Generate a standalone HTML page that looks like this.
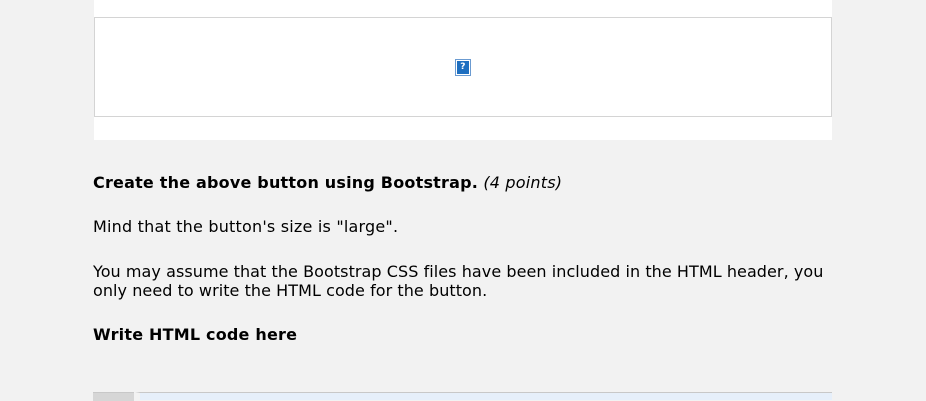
<!DOCTYPE html>
<html><head><style>
body{margin:0;background:#f2f2f2;width:926px;height:400px;overflow:hidden;font-family:"DejaVu Sans","Liberation Sans",sans-serif;font-size:16px;letter-spacing:0.2px;color:#000;position:relative}
.panel{position:absolute;left:94px;top:0;width:738px;height:140px;background:#fff}
.box{position:absolute;left:94px;top:17px;width:736px;height:98px;border:1px solid #d4d4d4;background:#fff}
.ic{position:absolute;left:455px;top:59px;width:12px;height:13px;border:1px solid #6b9bd1;background:#fff;padding:1px}
.ic div{width:12px;height:13px;background:#1e6fc0;color:#fff;font:bold 9px "DejaVu Sans",sans-serif;text-align:center;line-height:13px}
p{position:absolute;left:93px;margin:0;line-height:19px;width:760px}
.g{position:absolute;top:392px;left:93px;width:41px;height:8px;background:#d6d6d6;border-top:1px solid #c8c8c8}
.gb{position:absolute;top:392px;left:135px;width:697px;height:8px;background:#e6effa;border-top:1px solid #c8c8c8;border-left:5px solid #f2f2f2;box-sizing:border-box}
</style></head><body>
<div class="panel"></div>
<div class="box"></div>
<div class="ic"><div>?</div></div>
<p style="top:173px"><b>Create the above button using Bootstrap.</b> <i>(4 points)</i></p>
<p style="top:217px">Mind that the button's size is "large".</p>
<p style="top:262px;letter-spacing:0.06px">You may assume that the Bootstrap CSS files have been included in the HTML header, you<br>only need to write the HTML code for the button.</p>
<p style="top:325px"><b>Write HTML code here</b></p>
<div class="g"></div><div class="gb"></div>
</body></html>
